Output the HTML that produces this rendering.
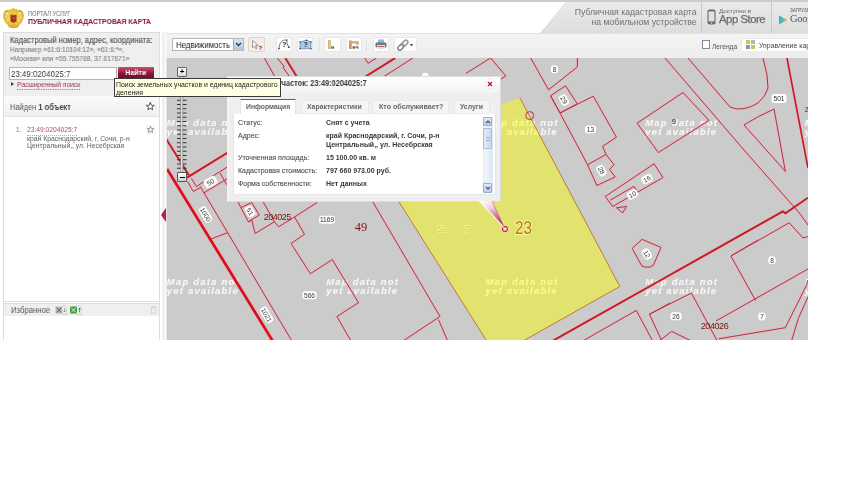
<!DOCTYPE html>
<html><head><meta charset="utf-8">
<style>
*{box-sizing:border-box;margin:0;padding:0}
html,body{width:850px;height:478px;overflow:hidden;background:#fff}
body{position:relative;font-family:"Liberation Sans",sans-serif;color:#333}
.a{position:absolute}
.t{position:absolute;white-space:nowrap;line-height:1;will-change:transform}
</style></head><body>

<!-- top stripe -->
<div class="a" style="left:0;top:0;width:808px;height:1.5px;background:#cdcdcd"></div>

<!-- logo -->
<svg class="a" style="left:2.5px;top:6.5px" width="22" height="22" viewBox="0 0 22 22">
 <defs><radialGradient id="lg" cx="0.5" cy="0.5" r="0.55"><stop offset="0" stop-color="#f6d860"/><stop offset="0.7" stop-color="#e8bc38"/><stop offset="1" stop-color="#c89a28"/></radialGradient></defs>
 <path d="M10.5 0.8 L12 2.2 L13.5 1.8 L14.2 3.2 Q17.5 2 19.6 4.5 Q21.2 7.5 20.4 11.5 Q19.4 15.5 16.5 17.8 L14.8 20.5 L10.5 21.3 L6.2 20.5 L4.5 17.8 Q1.6 15.5 0.6 11.5 Q-0.2 7.5 1.4 4.5 Q3.5 2 6.8 3.2 L7.5 1.8 L9 2.2 Z" fill="url(#lg)"/>
 <path d="M2 6 Q3.5 4.5 6 5.5 L5.5 9 L7 13 L4.5 14.5 Q2 12 2 9 Z M19 6 Q17.5 4.5 15 5.5 L15.5 9 L14 13 L16.5 14.5 Q19 12 19 9 Z" fill="#f8e890" opacity="0.75"/>
 <path d="M2.5 8.5 L5.5 9.5 M3 11.5 L6 12 M18.5 8.5 L15.5 9.5 M18 11.5 L15 12" stroke="#c89020" stroke-width="0.6"/>
 <path d="M7.4 7.8 L13.6 7.8 L13.6 13.6 Q13.6 15.6 10.5 16 Q7.4 15.6 7.4 13.6 Z" fill="#b8401a"/>
 <path d="M8.8 9.3 L12.2 9.3 L12.2 13.4 Q10.5 14.6 8.8 13.4 Z" fill="#8a2a10"/>
 <path d="M9.6 10.2 L11.6 10.6 L10.6 13 Z" fill="#d89a50"/>
 <path d="M7.5 17.5 L13.5 17.5 L12.3 20.3 L8.7 20.3 Z" fill="#e0b038"/>
</svg>
<div class="t" style="left:27.8px;top:9.8px;font-size:7px;color:#6a6a6a;transform:scaleX(0.81);transform-origin:0 0">ПОРТАЛ УСЛУГ</div>
<div class="t" style="left:27.5px;top:17.6px;font-size:8px;font-weight:bold;color:#8a1538;transform:scaleX(0.865);transform-origin:0 0">ПУБЛИЧНАЯ КАДАСТРОВАЯ КАРТА</div>

<!-- mobile banner -->
<div class="a" style="left:540px;top:2px;width:268px;height:31px;background:repeating-linear-gradient(135deg,rgba(255,255,255,0.18) 0 1.5px,rgba(255,255,255,0) 1.5px 3px),linear-gradient(180deg,#e8e8e8,#dadada);clip-path:polygon(25.5px 0,268px 0,268px 31px,0 31px)"></div>
<div class="t" style="left:554px;top:7.4px;width:142.5px;text-align:right;font-size:8.7px;color:#707070;line-height:10.1px">Публичная кадастровая карта<br>на мобильном устройстве</div>
<div class="a" style="left:701px;top:2px;width:1px;height:31px;background:#c8c8c8"></div>
<div class="a" style="left:771px;top:2px;width:1px;height:31px;background:#c8c8c8"></div>
<svg class="a" style="left:707px;top:9px" width="9" height="16" viewBox="0 0 9 16"><rect x="0.5" y="0.5" width="8" height="15" rx="1.8" fill="#6a6a6a"/><rect x="1.6" y="2.4" width="5.8" height="10" fill="#e2e2e2"/><circle cx="4.5" cy="14" r="0.8" fill="#ddd"/></svg>
<div class="t" style="left:719.4px;top:8.2px;font-size:6.2px;color:#666">Доступно в</div>
<div class="t" style="left:718.8px;top:14.3px;font-size:11.3px;color:#6a6a6a;letter-spacing:-0.45px;-webkit-text-stroke:0.25px #6a6a6a">App Store</div>
<svg class="a" style="left:777.5px;top:15px" width="10" height="10" viewBox="0 0 10 10"><defs><linearGradient id="gp" x1="0" y1="0" x2="1" y2="1"><stop offset="0" stop-color="#2aa8c8"/><stop offset="0.5" stop-color="#48c0a0"/><stop offset="1" stop-color="#e0405a"/></linearGradient></defs><path d="M1 0.5 L9 5 L1 9.5 Z" fill="url(#gp)"/><path d="M5.5 3 L9 5 L5.5 7Z" fill="#f0a060"/></svg>
<div class="t" style="left:789.7px;top:8.8px;font-size:4.6px;color:#555">ЗАГРУЗИТЕ</div>
<div class="t" style="left:789.5px;top:14.3px;font-size:10.5px;color:#555;font-family:'Liberation Serif',serif;letter-spacing:-0.3px">Google</div>
<div class="a" style="left:808px;top:0;width:42px;height:60px;background:#fff"></div>

<!-- left panel -->
<div class="a" style="left:3px;top:32px;width:157px;height:308px;border:1px solid #dcdcdc;border-bottom:none;background:#fff"></div>
<div class="a" style="left:4px;top:33px;width:155px;height:63px;background:#efefef"></div>
<div class="t" style="left:10px;top:36.0px;font-size:8.8px;color:#555;-webkit-text-stroke:0.15px #555;transform:scaleX(0.86);transform-origin:0 0">Кадастровый номер, адрес, координата:</div>
<div class="t" style="left:10px;top:46.0px;font-size:7.75px;color:#858585;-webkit-text-stroke:0.12px #858585;line-height:8.6px;transform:scaleX(0.86);transform-origin:0 0">Например «61:6:10104:12», «61:6:*»,<br>«Москва» или «55.755768, 37.617671»</div>
<div class="a" style="left:9px;top:66.7px;width:108px;height:13px;border:1px solid #b4b4b4;background:#fff"></div>
<div class="t" style="left:11.4px;top:68.6px;font-size:9.9px;color:#3a3a3a;transform:scaleX(0.8);transform-origin:0 0">23:49:0204025:7</div>
<div class="a" style="left:118px;top:66.5px;width:35.5px;height:12px;background:linear-gradient(180deg,#c85070,#8a1030 60%,#7a0c28);border-radius:1px"></div>
<div class="t" style="left:118px;top:68.8px;width:35.5px;text-align:center;font-size:8.1px;font-weight:bold;color:#fff;transform:scaleX(0.86);transform-origin:50% 0">Найти</div>
<div class="a" style="left:11px;top:82.2px;width:0;height:0;border-left:3px solid #8a1538;border-top:2.5px solid transparent;border-bottom:2.5px solid transparent"></div>
<div class="t" style="left:16.5px;top:80.5px;font-size:7.8px;color:#a03050;border-bottom:1px dotted #c06080;transform:scaleX(0.86);transform-origin:0 0">Расширенный поиск</div>

<div class="a" style="left:4px;top:96px;width:155px;height:21px;background:linear-gradient(180deg,#fbfbfb,#f0f0f0);border-bottom:1px solid #e2e2e2"></div>
<div class="t" style="left:9.7px;top:102.8px;font-size:8.7px;color:#555;transform:scaleX(0.86);transform-origin:0 0">Найден <b style="color:#444">1 объект</b></div>
<div class="a" style="left:145px;top:101px;width:11.3px;height:10.5px;background:#fff;border:1px solid #eeeeee"></div>
<svg class="a" style="left:146.4px;top:102px" width="8.5" height="8.5" viewBox="0 0 8 8"><path d="M4 0.5 L5.1 2.9 L7.6 3.1 L5.7 4.8 L6.3 7.4 L4 6 L1.7 7.4 L2.3 4.8 L0.4 3.1 L2.9 2.9 Z" fill="none" stroke="#5a5a5a" stroke-width="0.95" stroke-linejoin="round"/></svg>

<div class="t" style="left:15.6px;top:126.6px;font-size:6.4px;color:#777">1.</div>
<div class="t" style="left:26.9px;top:127.0px;font-size:6.7px;color:#a85070;padding-bottom:1px;border-bottom:1px dotted #d0a0b0">23:49:0204025:7</div>
<div class="t" style="left:26.8px;top:135.4px;font-size:6.8px;color:#606060;line-height:7px">край Краснодарский, г. Сочи, р-н<br>Центральный,, ул. Несебрская</div>
<div class="a" style="left:146.4px;top:125.1px;width:9px;height:9px;background:#fff;border:1px solid #f0f0f0"></div>
<svg class="a" style="left:147.4px;top:126px" width="7" height="7" viewBox="0 0 8 8"><path d="M4 0.5 L5.1 2.9 L7.6 3.1 L5.7 4.8 L6.3 7.4 L4 6 L1.7 7.4 L2.3 4.8 L0.4 3.1 L2.9 2.9 Z" fill="none" stroke="#777" stroke-width="0.95" stroke-linejoin="round"/></svg>

<div class="a" style="left:4px;top:301px;width:155px;height:1px;background:#ddd"></div>
<div class="a" style="left:4px;top:303px;width:155px;height:13px;background:#efefef;border-top:1px solid #ddd"></div>
<div class="t" style="left:10.6px;top:305.8px;font-size:9px;color:#555;transform:scaleX(0.86);transform-origin:0 0">Избранное</div>
<svg class="a" style="left:55px;top:305px" width="28" height="10" viewBox="0 0 28 10">
 <rect x="0.5" y="1.5" width="7" height="7" fill="#aaa" opacity="0.8"/><path d="M1.5 2.5 L6.5 7.5 M6.5 2.5 L1.5 7.5" stroke="#666" stroke-width="1"/>
 <path d="M7.5 0.5 L10 0.5 L11.5 2 L11.5 9.5 L7.5 9.5" fill="#eee" stroke="#bbb" stroke-width="0.6"/>
 <path d="M9.5 3 L9.5 7 M8.3 5.8 L9.5 7 L10.7 5.8" stroke="#888" stroke-width="0.7" fill="none"/>
 <rect x="15" y="1.5" width="7" height="7" fill="#3a9a3a"/><path d="M16 2.5 L21 7.5 M21 2.5 L16 7.5" stroke="#e8f8e8" stroke-width="1"/>
 <path d="M22 0.5 L24.5 0.5 L26.5 2.5 L26.5 9.5 L22 9.5" fill="#f4f4f4" stroke="#bbb" stroke-width="0.6"/>
 <path d="M24.5 7.5 L24.5 3 M23.2 4.2 L24.5 3 L25.8 4.2" stroke="#2a8ad8" stroke-width="0.9" fill="none"/>
</svg>
<svg class="a" style="left:151px;top:305.5px" width="5" height="8" viewBox="0 0 5 8"><rect x="0.5" y="1.5" width="4" height="6" fill="none" stroke="#d0d0d0" stroke-width="0.8"/><rect x="0" y="0.5" width="5" height="1" fill="#d0d0d0"/></svg>

<!-- separator -->
<div class="a" style="left:161.5px;top:32px;width:3px;height:308px;background:#f0f0f0"></div><div class="a" style="left:166px;top:32px;width:1px;height:308px;background:#e2e2e2"></div>
<div class="a" style="left:161px;top:208px;width:0;height:0;border-right:5px solid #b02050;border-top:7px solid transparent;border-bottom:7px solid transparent"></div>

<!-- map container top / toolbar -->
<div class="a" style="left:166px;top:32.5px;width:642px;height:25.5px;background:linear-gradient(180deg,#f4f4f4,#ededed);border-top:1px solid #e2e2e2"></div>


<!-- toolbar -->
<div class="a" style="left:172px;top:38.3px;width:72px;height:12.5px;border:1px solid #b6b6b6;background:#fff"></div>
<div class="t" style="left:175.5px;top:40.8px;font-size:9px;color:#222;transform:scaleX(0.872);transform-origin:0 0">Недвижимость</div>
<div class="a" style="left:233px;top:39px;width:10px;height:11px;background:linear-gradient(180deg,#d8e4f4,#b4c8e4);border-left:1px solid #9ab"></div>
<svg class="a" style="left:235px;top:42px" width="7" height="5" viewBox="0 0 7 5"><path d="M1 1 L3.5 3.5 L6 1" stroke="#335" stroke-width="1.3" fill="none"/></svg>

<div class="a btn" style="left:248px;top:37px;width:17px;height:15px;background:#f6ede8;border:1px solid #e3d3cc;border-radius:2px"></div>
<svg class="a" style="left:251px;top:40px" width="12" height="10" viewBox="0 0 12 10"><path d="M1.5 0.5 L1.5 8 L3.5 6 L5 9 L6 8.5 L4.7 5.5 L7.5 5.5 Z" fill="#f3f3f3" stroke="#8a8a8a" stroke-width="0.8"/><text x="7.5" y="9.5" font-size="6" font-weight="bold" fill="#444" font-family="Liberation Sans">?</text></svg>

<div class="a btn" style="left:276px;top:37px;width:16px;height:15px;background:#fff;border:1px solid #e8e8e8;border-radius:2px"></div>
<svg class="a" style="left:278px;top:39px" width="13" height="11" viewBox="0 0 13 11"><path d="M0.9 9.6 Q1.5 3 5.5 1.2 L8.8 1.0 Q8.2 5 10.9 8.2" stroke="#555" stroke-width="0.8" fill="none"/><circle cx="0.9" cy="9.6" r="0.9" fill="#444"/><circle cx="10.9" cy="8.2" r="0.9" fill="#444"/><circle cx="8.8" cy="1.0" r="0.7" fill="#444"/><text x="4.3" y="7.6" font-size="6.5" font-weight="bold" fill="#222" font-family="Liberation Sans">?</text></svg>

<div class="a btn" style="left:297px;top:37px;width:16px;height:15px;background:#fff;border:1px solid #e8e8e8;border-radius:2px"></div>
<svg class="a" style="left:298.5px;top:39px" width="13" height="11" viewBox="0 0 13 11"><path d="M1 3 L7.5 1.2 L12 3 L12 9.8 L1 9.8 Z" fill="#a8c8e8" stroke="#5a7a98" stroke-width="0.7"/><g fill="#3a4a5a"><circle cx="1" cy="3" r="0.8"/><circle cx="7.5" cy="1.2" r="0.8"/><circle cx="12" cy="3" r="0.8"/><circle cx="12" cy="9.8" r="0.8"/><circle cx="1" cy="9.8" r="0.8"/></g><text x="4.8" y="8.4" font-size="6.5" font-weight="bold" fill="#223" font-family="Liberation Sans">?</text></svg>

<div class="a" style="left:318.7px;top:38px;width:1px;height:13px;border-left:1px dotted #d4d4d4"></div>

<div class="a btn" style="left:324px;top:37px;width:17px;height:15px;background:#fff;border:1px solid #e8e8e8;border-radius:2px"></div>
<svg class="a" style="left:327px;top:39px" width="11" height="11" viewBox="0 0 11 11"><rect x="1" y="1" width="2.7" height="9" fill="#d0a868"/><rect x="1.7" y="1" width="1" height="9" fill="#e8c890"/><text x="4" y="9.8" font-size="5.2" font-weight="bold" fill="#3a3a3a" font-family="Liberation Sans">н</text></svg>

<div class="a btn" style="left:346px;top:37px;width:16px;height:15px;background:#fff;border:1px solid #e8e8e8;border-radius:2px"></div>
<svg class="a" style="left:348px;top:39px" width="12" height="11" viewBox="0 0 12 11"><rect x="1" y="1.5" width="2.7" height="8.5" fill="#c89858"/><rect x="1" y="2.2" width="9.5" height="2.3" fill="#d8a868"/><rect x="8.3" y="2.2" width="2.2" height="4" fill="#d8a868"/><text x="4.3" y="10.2" font-size="5.2" font-weight="bold" fill="#3a3a3a" font-family="Liberation Sans">нч</text></svg>

<div class="a" style="left:366px;top:38px;width:1px;height:13px;border-left:1px dotted #d4d4d4"></div>

<div class="a btn" style="left:373px;top:37px;width:16px;height:15px;background:#fff;border:1px solid #e8e8e8;border-radius:2px"></div>
<svg class="a" style="left:375px;top:39px" width="12" height="11" viewBox="0 0 12 11"><rect x="3" y="0.5" width="6" height="3.5" fill="#8ab8e0"/><rect x="0.5" y="3.5" width="11" height="5" rx="1" fill="#707880"/><rect x="2" y="6" width="8" height="4" fill="#e0e0e0"/><rect x="2.5" y="7" width="7" height="0.8" fill="#a04040"/></svg>

<div class="a btn" style="left:394px;top:37px;width:23px;height:15px;background:#fff;border:1px solid #e8e8e8;border-radius:2px"></div>
<svg class="a" style="left:397px;top:39px" width="18" height="12" viewBox="0 0 18 12"><g transform="rotate(-45 6 6)"><rect x="-0.5" y="4" width="7" height="4" rx="2" fill="none" stroke="#8a8a8a" stroke-width="1.6"/><rect x="5" y="4" width="7" height="4" rx="2" fill="none" stroke="#9a9a9a" stroke-width="1.6"/></g><path d="M12.8 5.2 L16.2 5.2 L14.5 7.2 Z" fill="#222"/></svg>

<!-- legend / manage -->
<div class="a" style="left:702px;top:40px;width:8px;height:8.5px;border:1px solid #7a8ca0;background:#fff"></div>
<div class="t" style="left:712px;top:43.6px;font-size:6.6px;color:#555">Легенда</div>
<div class="a" style="left:741px;top:38px;width:67px;height:14px;background:#fff;border:1px solid #ececec;border-right:none"></div>
<div class="a" style="left:746px;top:40px;width:4px;height:4px;background:#c8c850"></div>
<div class="a" style="left:751px;top:40px;width:4px;height:4px;background:#a8b8c8"></div>
<div class="a" style="left:746px;top:45px;width:4px;height:4px;background:#8898a8"></div>
<div class="a" style="left:751px;top:45px;width:4px;height:4px;background:#c8c850"></div>
<div class="t" style="left:759.2px;top:42.8px;font-size:6.9px;color:#444;width:48.8px;overflow:hidden">Управление картами</div>


<!--MAP-->
<svg class="a" style="left:167px;top:58px;will-change:transform" width="641" height="282" viewBox="167 58 641 282">
<rect x="167" y="58" width="641" height="282" fill="#cbcbcb"/>
<g font-family="Liberation Sans" font-style="italic" font-weight="bold" font-size="9.5" fill="#f7f7f7" letter-spacing="1.2" stroke="#f7f7f7" stroke-width="0.1">
<text x="166.8" y="126.0">Map data not</text><text x="166.8" y="135.1">yet available</text><text x="326.2" y="126.0">Map data not</text><text x="326.2" y="135.1">yet available</text><text x="485.6" y="126.0">Map data not</text><text x="485.6" y="135.1">yet available</text><text x="645.2" y="126.0">Map data not</text><text x="645.2" y="135.1">yet available</text><text x="804.8" y="126.0">Map data not</text><text x="804.8" y="135.1">yet available</text><text x="166.8" y="284.7">Map data not</text><text x="166.8" y="293.8">yet available</text><text x="326.2" y="284.7">Map data not</text><text x="326.2" y="293.8">yet available</text><text x="485.6" y="284.7">Map data not</text><text x="485.6" y="293.8">yet available</text><text x="645.2" y="284.7">Map data not</text><text x="645.2" y="293.8">yet available</text><text x="804.8" y="284.7">Map data not</text><text x="804.8" y="293.8">yet available</text>
</g>
<polygon points="519.8,97.7 619.8,286.5 523,341 486.7,341 398.5,201 470,115" fill="#ffff00" fill-opacity="0.45"/>
<g fill="none" stroke="#eeb0bc" stroke-opacity="0.7" stroke-linejoin="miter">
<path d="M264.4,58 L280,86" stroke-width="2.40"/>
<path d="M277.3,58 L284.3,66.5 L283,67.5 L292,80" stroke-width="2.40"/>
<path d="M285.3,58 L297,77" stroke-width="3.20"/>
<path d="M364.7,58 L368.2,63.2 L376.5,58" stroke-width="2.40"/>
<path d="M395.3,58 L360,80" stroke-width="3.40"/>
<path d="M413,58 L380,79" stroke-width="2.40"/>
<path d="M465.9,73.4 L490.6,58 L505.8,75.9 L498,81" stroke-width="2.40"/>
<path d="M530.7,58 L548.6,89.8 L577.4,66.9 L577.4,58" stroke-width="2.40"/>
<path d="M550.6,95.8 L565.5,85.8 L577.3,103.8 L560,113 Z" stroke-width="2.40"/>
<path d="M560,113 L593.3,96.2 L616.4,137.2 L602.6,146.4 L606,154.4 L587.6,164.8" stroke-width="2.40"/>
<path d="M550.6,95.8 L560,113 L587.6,164.8 L596.8,185.5 L615.2,177 L609.5,169.4 L614.1,164.8 L606,154.4" stroke-width="2.40"/>
<path d="M605.2,196.5 L654.1,163.8 L662.9,177.6 L612.7,206.5 Z" stroke-width="2.40"/>
<path d="M610.2,200.2 L634,186.4 L637.8,192.7" stroke-width="2.40"/>
<path d="M616.5,207.8 L626.5,206.5 L622.7,212.8 Z" stroke-width="2.40"/>
<path d="M632.2,248.4 L642.1,239.4 L661,247.4 L653.4,265.3 Q648,269 641.7,265.8 Z" stroke-width="2.40"/>
<path d="M637.1,123.2 L683,92.5 L709,120.4 L658.4,152.6 Z" stroke-width="2.40"/>
<path d="M665,58 L744,150 L799.2,212.8 L808,225" stroke-width="2.40"/>
<path d="M688,58 L730,107 Q736,110 744,108.6 Q752,107 758,103 Q766,96 768,88 L767,75 L763,58" stroke-width="2.40"/>
<path d="M744,125 Q758,116 774,109 L785.4,171.4 Z" stroke-width="2.40"/>
<path d="M787,58 L808,168" stroke-width="3.00"/>
<path d="M552.4,341 L782.9,211.5 L785.4,213.3 L808,197.7" stroke-width="3.30"/>
<path d="M758,240 L730.9,256 L789.2,222.8 L803,237.9 L808,236.6" stroke-width="2.40"/>
<path d="M730.9,256 L755.6,300.5" stroke-width="2.40"/>
<path d="M716,321 L808,269" stroke-width="2.40"/>
<path d="M808,280 L806.3,285.7 L785.3,327.7 L718.6,338.8" stroke-width="2.40"/>
<path d="M808,296.8 Q797,318 791.5,341" stroke-width="2.40"/>
<path d="M661.8,341 L649.4,314.1 L691.4,293.1 L717.3,341" stroke-width="2.40"/>
<path d="M659.3,341 L671.6,331.4 L691.4,341" stroke-width="2.40"/>
<path d="M582.7,341 L636.3,310.4 L652.7,341" stroke-width="2.40"/>
<path d="M649.4,314.5 L670,303" stroke-width="2.40"/>
<path d="M165,137 L188.9,175.2" stroke-width="3.30"/>
<path d="M167,168.9 L272.7,341" stroke-width="4.10"/>
<path d="M187,177.7 L240,145" stroke-width="3.40"/>
<path d="M191.4,178.3 L196.4,186.5 L240,159" stroke-width="2.40"/>
<path d="M187.6,181.5 L193.3,191.5 L200.2,187.7" stroke-width="2.40"/>
<path d="M200.2,186.5 L204,192.8 L240,171" stroke-width="2.40"/>
<path d="M220.3,173.3 L226.6,184.6" stroke-width="2.40"/>
<path d="M204,192.8 L291.9,341" stroke-width="2.40"/>
<path d="M237.6,201 L240.9,207.6 L251.8,202.5 L259.3,215.1 L248.4,221.8 L240.9,207.6" stroke-width="2.40"/>
<path d="M248.4,221.8 L251.8,220.1 L255.1,233.5 L274.4,221.8 L278.6,226.8 L293.6,217.6 L317,202.5" stroke-width="2.40"/>
<path d="M262.7,201 L274.4,221.8" stroke-width="2.40"/>
<path d="M294.5,216.8 L304.5,234.3 L291.1,243.5 L310.4,273.7 L332.3,259.6 L358.5,302.7 L336.9,316.5 L351,341" stroke-width="2.40"/>
<path d="M372.3,201 L440,316.5 L403,341" stroke-width="2.40"/>
<path d="M438.5,319.6 L447.7,341" stroke-width="2.40"/>
<path d="M211,239 L228,232.5" stroke-width="2.40"/>
</g>
<g fill="none" stroke="#bf3038" stroke-linejoin="miter">
<path d="M264.4,58 L280,86" stroke-width="1.0" stroke="#b03444"/>
<path d="M277.3,58 L284.3,66.5 L283,67.5 L292,80" stroke-width="1.0" stroke="#b03444"/>
<path d="M285.3,58 L297,77" stroke-width="1.8" stroke="#c01c24"/>
<path d="M364.7,58 L368.2,63.2 L376.5,58" stroke-width="1.0" stroke="#b03444"/>
<path d="M395.3,58 L360,80" stroke-width="2.0" stroke="#c01c24"/>
<path d="M413,58 L380,79" stroke-width="1.0" stroke="#b03444"/>
<path d="M465.9,73.4 L490.6,58 L505.8,75.9 L498,81" stroke-width="1.0" stroke="#b03444"/>
<path d="M530.7,58 L548.6,89.8 L577.4,66.9 L577.4,58" stroke-width="1.0" stroke="#b03444"/>
<path d="M550.6,95.8 L565.5,85.8 L577.3,103.8 L560,113 Z" stroke-width="1.0" stroke="#b03444"/>
<path d="M560,113 L593.3,96.2 L616.4,137.2 L602.6,146.4 L606,154.4 L587.6,164.8" stroke-width="1.0" stroke="#b03444"/>
<path d="M550.6,95.8 L560,113 L587.6,164.8 L596.8,185.5 L615.2,177 L609.5,169.4 L614.1,164.8 L606,154.4" stroke-width="1.0" stroke="#b03444"/>
<path d="M605.2,196.5 L654.1,163.8 L662.9,177.6 L612.7,206.5 Z" stroke-width="1.0" stroke="#b03444"/>
<path d="M610.2,200.2 L634,186.4 L637.8,192.7" stroke-width="1.0" stroke="#b03444"/>
<path d="M616.5,207.8 L626.5,206.5 L622.7,212.8 Z" stroke-width="1.0" stroke="#b03444"/>
<path d="M632.2,248.4 L642.1,239.4 L661,247.4 L653.4,265.3 Q648,269 641.7,265.8 Z" stroke-width="1.0" stroke="#b03444"/>
<path d="M637.1,123.2 L683,92.5 L709,120.4 L658.4,152.6 Z" stroke-width="1.0" stroke="#b03444"/>
<path d="M665,58 L744,150 L799.2,212.8 L808,225" stroke-width="1.0" stroke="#b03444"/>
<path d="M688,58 L730,107 Q736,110 744,108.6 Q752,107 758,103 Q766,96 768,88 L767,75 L763,58" stroke-width="1.0" stroke="#b03444"/>
<path d="M744,125 Q758,116 774,109 L785.4,171.4 Z" stroke-width="1.0" stroke="#b03444"/>
<path d="M787,58 L808,168" stroke-width="1.6" stroke="#c01c24"/>
<path d="M552.4,341 L782.9,211.5 L785.4,213.3 L808,197.7" stroke-width="1.9" stroke="#c01c24"/>
<path d="M758,240 L730.9,256 L789.2,222.8 L803,237.9 L808,236.6" stroke-width="1.0" stroke="#b03444"/>
<path d="M730.9,256 L755.6,300.5" stroke-width="1.0" stroke="#b03444"/>
<path d="M716,321 L808,269" stroke-width="1.0" stroke="#b03444"/>
<path d="M808,280 L806.3,285.7 L785.3,327.7 L718.6,338.8" stroke-width="1.0" stroke="#b03444"/>
<path d="M808,296.8 Q797,318 791.5,341" stroke-width="1.0" stroke="#b03444"/>
<path d="M661.8,341 L649.4,314.1 L691.4,293.1 L717.3,341" stroke-width="1.0" stroke="#b03444"/>
<path d="M659.3,341 L671.6,331.4 L691.4,341" stroke-width="1.0" stroke="#b03444"/>
<path d="M582.7,341 L636.3,310.4 L652.7,341" stroke-width="1.0" stroke="#b03444"/>
<path d="M649.4,314.5 L670,303" stroke-width="1.0" stroke="#b03444"/>
<path d="M165,137 L188.9,175.2" stroke-width="1.9" stroke="#c01c24"/>
<path d="M167,168.9 L272.7,341" stroke-width="2.7" stroke="#d8101c"/>
<path d="M187,177.7 L240,145" stroke-width="2.0" stroke="#c01c24"/>
<path d="M191.4,178.3 L196.4,186.5 L240,159" stroke-width="1.0" stroke="#b03444"/>
<path d="M187.6,181.5 L193.3,191.5 L200.2,187.7" stroke-width="1.0" stroke="#b03444"/>
<path d="M200.2,186.5 L204,192.8 L240,171" stroke-width="1.0" stroke="#b03444"/>
<path d="M220.3,173.3 L226.6,184.6" stroke-width="1.0" stroke="#b03444"/>
<path d="M204,192.8 L291.9,341" stroke-width="1.0" stroke="#b03444"/>
<path d="M237.6,201 L240.9,207.6 L251.8,202.5 L259.3,215.1 L248.4,221.8 L240.9,207.6" stroke-width="1.0" stroke="#b03444"/>
<path d="M248.4,221.8 L251.8,220.1 L255.1,233.5 L274.4,221.8 L278.6,226.8 L293.6,217.6 L317,202.5" stroke-width="1.0" stroke="#b03444"/>
<path d="M262.7,201 L274.4,221.8" stroke-width="1.0" stroke="#b03444"/>
<path d="M294.5,216.8 L304.5,234.3 L291.1,243.5 L310.4,273.7 L332.3,259.6 L358.5,302.7 L336.9,316.5 L351,341" stroke-width="1.0" stroke="#b03444"/>
<path d="M372.3,201 L440,316.5 L403,341" stroke-width="1.0" stroke="#b03444"/>
<path d="M438.5,319.6 L447.7,341" stroke-width="1.0" stroke="#b03444"/>
<path d="M211,239 L228,232.5" stroke-width="1.0" stroke="#b03444"/>
</g>
<path d="M519.8,97.7 L619.8,286.5 L523,341 M486.7,341 L398.5,201" fill="none" stroke="#c07a38" stroke-width="1"/>
<g font-family="Liberation Sans" font-size="6.6" fill="#333" text-anchor="middle">
<ellipse cx="425.3" cy="75" rx="3.2" ry="2.2" fill="#fff"/><g transform="translate(554.5,69.2)"><rect x="-3.65" y="-4.0" width="7.3" height="8" rx="3" fill="#fff"/><text y="2.38">8</text></g><g transform="translate(590.5,129.5)"><rect x="-5.55" y="-4.0" width="11.1" height="8" rx="3" fill="#fff"/><text y="2.38">13</text></g><g transform="translate(779,98.6)"><rect x="-7.5" y="-4.5" width="15" height="9" rx="3" fill="#fff"/><text y="2.38">501</text></g><g transform="translate(327,219.8)"><rect x="-8.0" y="-4.0" width="16" height="8" rx="3" fill="#fff"/><text y="2.38">1169</text></g><g transform="translate(309.5,295.2)"><rect x="-7.0" y="-4.0" width="14" height="8" rx="3" fill="#fff"/><text y="2.38">566</text></g><g transform="translate(676,316.2)"><rect x="-5.55" y="-4.0" width="11.1" height="8" rx="3" fill="#fff"/><text y="2.38">26</text></g><g transform="translate(762,316.5)"><rect x="-3.65" y="-4.0" width="7.3" height="8" rx="3" fill="#fff"/><text y="2.38">7</text></g><g transform="translate(772,260.2)"><rect x="-3.65" y="-4.0" width="7.3" height="8" rx="3" fill="#fff"/><text y="2.38">8</text></g><g transform="translate(564,100) rotate(60)"><rect x="-5.55" y="-4.0" width="11.1" height="8" rx="3" fill="#fff"/><text y="2.38">29</text></g><g transform="translate(601.4,170.6) rotate(60)"><rect x="-5.55" y="-4.0" width="11.1" height="8" rx="3" fill="#fff"/><text y="2.38">28</text></g><g transform="translate(632.5,194.5) rotate(-30)"><rect x="-5.55" y="-4.0" width="11.1" height="8" rx="3" fill="#fff"/><text y="2.38">10</text></g><g transform="translate(647,179) rotate(-30)"><rect x="-5.55" y="-4.0" width="11.1" height="8" rx="3" fill="#fff"/><text y="2.38">16</text></g><g transform="translate(646.8,254) rotate(60)"><rect x="-5.55" y="-4.0" width="11.1" height="8" rx="3" fill="#fff"/><text y="2.38">12</text></g><g transform="translate(210.5,182) rotate(-30)"><rect x="-6.5" y="-4.5" width="13" height="9" rx="3" fill="#fff"/><text y="2.59">50</text></g><g transform="translate(250,211.5) rotate(60)"><rect x="-5.55" y="-4.0" width="11.1" height="8" rx="3" fill="#fff"/><text y="2.38">51</text></g><g transform="translate(205.5,214.5) rotate(60)"><rect x="-8.5" y="-4.0" width="17" height="8" rx="3" fill="#fff"/><text y="2.38">1000</text></g><g transform="translate(266.5,315) rotate(60)"><rect x="-8.5" y="-4.0" width="17" height="8" rx="3" fill="#fff"/><text y="2.38">1021</text></g>
<text x="673.9" y="124" fill="#222" font-size="7.5">9</text>
<text x="807" y="112" fill="#333" font-size="7">Z</text>
</g>
<g font-family="Liberation Sans" fill="#7a1010" text-anchor="middle">
 <text x="277.3" y="220.3" font-size="9" letter-spacing="-0.5">204025</text>
 <text x="714.5" y="328.8" font-size="9" letter-spacing="-0.4">204026</text>
 <text x="361" y="231.2" font-size="12.5" font-family="Liberation Serif" fill="#7a1414">49</text>
</g>
<g font-family="Liberation Sans" fill="#c4b848" text-anchor="middle" font-size="9.6" stroke="#ffff98" stroke-width="1.5" paint-order="stroke">
 <text x="0" y="0" transform="translate(442,231.9) scale(0.8,1)">58</text><text x="0" y="0" transform="translate(466.8,231.6) scale(0.78,1)">7</text>
</g>
<circle cx="529.7" cy="115.6" r="4" fill="none" stroke="#bf3038" stroke-width="1"/>
<text x="0" y="0" transform="translate(523.5,233.8) scale(0.82,1)" font-family="Liberation Sans" font-size="18.5" fill="#b07818" stroke="#fff6a0" stroke-width="1.8" paint-order="stroke" text-anchor="middle">23</text>
<circle cx="505" cy="229" r="2.4" fill="#fae0ec" stroke="#c01858" stroke-width="1.1"/>
</svg>
<!--/MAP-->



<!-- zoom slider -->
<div class="a" style="left:177px;top:67px;width:10px;height:10px;background:linear-gradient(180deg,#fff,#ddd);border:1px solid #666;border-radius:1px"></div>
<div class="t" style="left:177px;top:68px;width:10px;text-align:center;font-size:8px;font-weight:bold;color:#000;line-height:8px">+</div>
<svg class="a" style="left:175px;top:77.2px" width="14" height="95" viewBox="0 0 14 95">
 <rect x="5.2" y="0" width="3" height="95" fill="#9a9a9a"/>
 <rect x="6.1" y="0" width="1.2" height="95" fill="#e4e4e4"/>
 <g stroke="#303030" stroke-width="1"><path d="M2 19.00 H5.6 M7.9 19.00 H11.5"/><path d="M2 23.25 H5.6 M7.9 23.25 H11.5"/><path d="M2 27.50 H5.6 M7.9 27.50 H11.5"/><path d="M2 31.75 H5.6 M7.9 31.75 H11.5"/><path d="M2 36.00 H5.6 M7.9 36.00 H11.5"/><path d="M2 40.25 H5.6 M7.9 40.25 H11.5"/><path d="M2 44.50 H5.6 M7.9 44.50 H11.5"/><path d="M2 48.75 H5.6 M7.9 48.75 H11.5"/><path d="M2 53.00 H5.6 M7.9 53.00 H11.5"/><path d="M2 57.25 H5.6 M7.9 57.25 H11.5"/><path d="M2 61.50 H5.6 M7.9 61.50 H11.5"/><path d="M2 65.75 H5.6 M7.9 65.75 H11.5"/><path d="M2 70.00 H5.6 M7.9 70.00 H11.5"/><path d="M2 74.25 H5.6 M7.9 74.25 H11.5"/><path d="M2 78.50 H5.6 M7.9 78.50 H11.5"/><path d="M2 82.75 H5.6 M7.9 82.75 H11.5"/><path d="M2 87.00 H5.6 M7.9 87.00 H11.5"/><path d="M2 91.25 H5.6 M7.9 91.25 H11.5"/></g>
</svg>
<div class="a" style="left:177px;top:172px;width:10px;height:10px;background:linear-gradient(180deg,#fff,#ccc);border:1px solid #555;border-radius:1px"></div>
<div class="a" style="left:179.5px;top:176.5px;width:5px;height:1.5px;background:#000"></div>

<!-- popup -->
<div class="a" style="left:226.8px;top:75.5px;width:274px;height:126px;background:#ececec;border:1px solid #dcdcdc;border-left:2.2px solid #f6f2f2"></div>
<div class="a" style="left:229px;top:76.5px;width:271px;height:16px;background:linear-gradient(180deg,#ffffff,#f2f2f2)"></div>
<div class="a" style="left:229px;top:92.5px;width:271px;height:108px;background:#efefef"></div>
<div class="t" style="left:233.3px;top:79.0px;font-size:8.5px;font-weight:bold;color:#383838;transform:scaleX(0.865);transform-origin:0 0">Земельный участок: 23:49:0204025:7</div>
<div class="a" style="left:484.5px;top:78px;width:11px;height:11px;border-radius:50%;background:#fff;border:1px solid #e6e6e6"></div>
<svg class="a" style="left:487px;top:80.5px" width="6" height="6" viewBox="0 0 6 6"><path d="M1 1 L5 5 M5 1 L1 5" stroke="#c01848" stroke-width="1.4"/></svg>

<div class="a" style="left:240px;top:99px;width:56px;height:16px;background:#fff;border-top:1px solid #c83050;border-left:1px solid #e4e4e4;border-right:1px solid #e4e4e4"></div>
<div class="t" style="left:246px;top:104px;font-size:6.8px;font-weight:bold;color:#666">Информация</div>
<div class="a" style="left:300.5px;top:99.5px;width:68px;height:14px;background:#f5f5f5;border:1px solid #e9e9e9"></div>
<div class="t" style="left:307px;top:104px;font-size:6.9px;font-weight:bold;color:#666">Характеристики</div>
<div class="a" style="left:372px;top:99.5px;width:77px;height:14px;background:#f5f5f5;border:1px solid #e9e9e9"></div>
<div class="t" style="left:378.5px;top:104px;font-size:7.1px;font-weight:bold;color:#666">Кто обслуживает?</div>
<div class="a" style="left:453.5px;top:99.5px;width:36px;height:14px;background:#f5f5f5;border:1px solid #e9e9e9"></div>
<div class="t" style="left:460px;top:104px;font-size:6.9px;font-weight:bold;color:#666">Услуги</div>

<div class="a" style="left:233.3px;top:114.4px;width:262.7px;height:80.6px;background:#fff;border:1px solid #e6e6e6;border-top:none"></div>
<div class="t" style="left:238px;top:119.3px;font-size:7px;color:#505050;-webkit-text-stroke:0.12px #505050;line-height:8.5px">Статус:</div>
<div class="t" style="left:238px;top:132.4px;font-size:7px;color:#505050;-webkit-text-stroke:0.12px #505050">Адрес:</div>
<div class="t" style="left:238px;top:154.3px;font-size:7px;color:#505050;-webkit-text-stroke:0.12px #505050">Уточненная площадь:</div>
<div class="t" style="left:238px;top:167.3px;font-size:7px;color:#505050;-webkit-text-stroke:0.12px #505050">Кадастровая стоимость:</div>
<div class="t" style="left:238px;top:179.8px;font-size:7px;color:#505050;-webkit-text-stroke:0.12px #505050">Форма собственности:</div>
<div class="t" style="left:326px;top:119.3px;font-size:7px;font-weight:bold;color:#383838">Снят с учета</div>
<div class="t" style="left:326px;top:132.4px;font-size:7px;font-weight:bold;color:#383838;line-height:8.6px">край Краснодарский, г. Сочи, р-н<br>Центральный,, ул. Несебрская</div>
<div class="t" style="left:326px;top:154.3px;font-size:7px;font-weight:bold;color:#383838">15 100.00 кв. м</div>
<div class="t" style="left:326px;top:167.3px;font-size:7px;font-weight:bold;color:#383838">797 660 973.00 руб.</div>
<div class="t" style="left:326px;top:179.8px;font-size:7px;font-weight:bold;color:#383838">Нет данных</div>
<!-- scrollbar -->
<div class="a" style="left:482.5px;top:117px;width:10px;height:76px;background:linear-gradient(90deg,#f2f6fb,#dde7f4);border-left:1px solid #e4eaf2"></div>
<div class="a" style="left:483px;top:117px;width:9px;height:9px;background:linear-gradient(180deg,#e4ecf8,#bccce4);border:1px solid #9aaccc;border-radius:1px"></div>
<svg class="a" style="left:484.5px;top:119.5px" width="6" height="4" viewBox="0 0 6 4"><path d="M1 3.2 L3 1 L5 3.2" stroke="#2a3a6a" stroke-width="1.1" fill="none"/></svg>
<div class="a" style="left:483px;top:127.5px;width:9px;height:21px;background:linear-gradient(90deg,#e2ecf8,#c8d8ee);border:1px solid #a8bcd8;border-radius:1px"></div>
<div class="a" style="left:485.5px;top:137px;width:4px;height:4px;border-top:1px solid #9cb0cc;border-bottom:1px solid #9cb0cc"></div>
<div class="a" style="left:483px;top:182.5px;width:9px;height:10px;background:linear-gradient(180deg,#e4ecf8,#bccce4);border:1px solid #9aaccc;border-radius:1px"></div>
<svg class="a" style="left:484.5px;top:186px" width="6" height="4" viewBox="0 0 6 4"><path d="M1 0.8 L3 3 L5 0.8" stroke="#2a3a6a" stroke-width="1.1" fill="none"/></svg>

<!-- popup pointer -->
<svg class="a" style="left:476px;top:199px" width="32" height="34" viewBox="476 199 32 34">
 <defs><linearGradient id="pg" x1="0" y1="0" x2="0.3" y2="1"><stop offset="0" stop-color="#ffffff"/><stop offset="0.35" stop-color="#f4d0e0"/><stop offset="1" stop-color="#b82860"/></linearGradient></defs>
 <path d="M479.3,200.8 L492,200.8 L504.6,228.2 Z" fill="url(#pg)"/>
 <path d="M479.3,200.8 L504.6,228.2" stroke="#ffffff" stroke-width="1.2" opacity="0.9"/>
 <path d="M492,201 L504.6,228.2" stroke="#a83a60" stroke-width="0.6" opacity="0.7"/>
</svg>
<!-- tooltip -->
<div class="a" style="left:113.5px;top:78px;width:167px;height:19px;background:#ffffe1;border:1px solid #3a3a3a"></div>
<div class="t" style="left:116px;top:81px;font-size:6.9px;color:#222;line-height:7.8px">Поиск земельных участков и единиц кадастрового<br>деления</div>

</body></html>
